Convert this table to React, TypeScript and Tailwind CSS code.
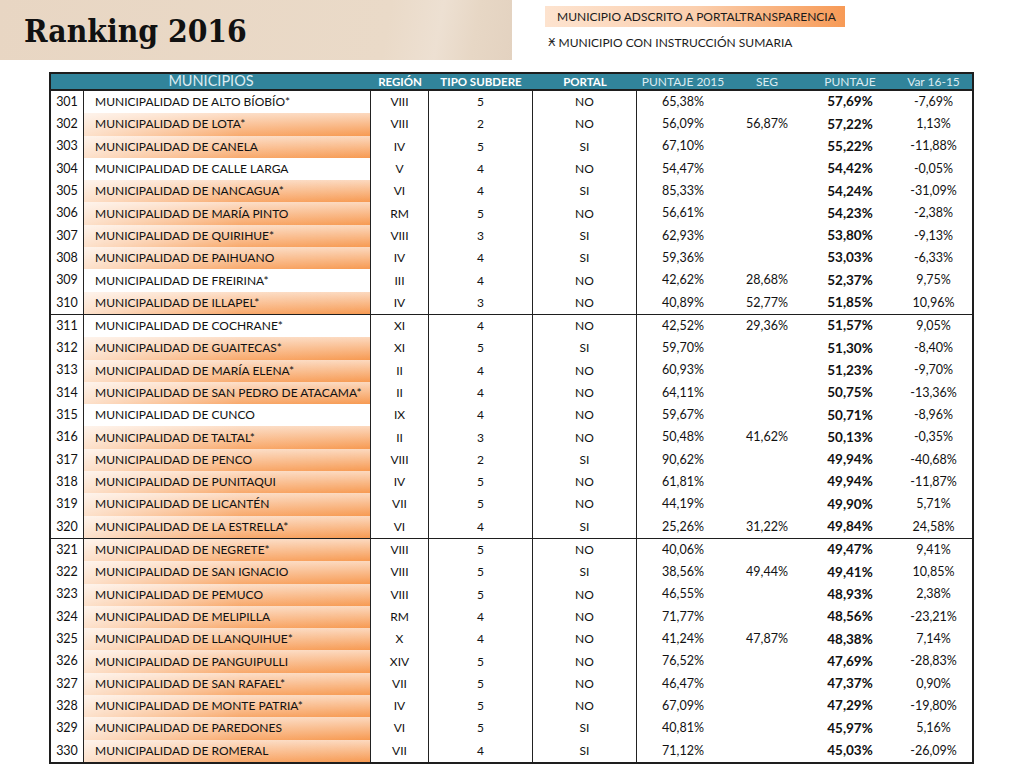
type Row = {
  n: number;
  name: string;
  region: string;
  tipo: string;
  portal: string;
  p2015: string;
  seg: string;
  puntaje: string;
  variacion: string;
  orange: boolean;
};

const raw: [number, string, string, string, string, string, string, string, string, boolean][] = [
  [301, "ALTO BÍOBÍO*", "VIII", "5", "NO", "65,38%", "", "57,69%", "-7,69%", false],
  [302, "LOTA*", "VIII", "2", "NO", "56,09%", "56,87%", "57,22%", "1,13%", true],
  [303, "CANELA", "IV", "5", "SI", "67,10%", "", "55,22%", "-11,88%", true],
  [304, "CALLE LARGA", "V", "4", "NO", "54,47%", "", "54,42%", "-0,05%", false],
  [305, "NANCAGUA*", "VI", "4", "SI", "85,33%", "", "54,24%", "-31,09%", true],
  [306, "MARÍA PINTO", "RM", "5", "NO", "56,61%", "", "54,23%", "-2,38%", true],
  [307, "QUIRIHUE*", "VIII", "3", "SI", "62,93%", "", "53,80%", "-9,13%", true],
  [308, "PAIHUANO", "IV", "4", "SI", "59,36%", "", "53,03%", "-6,33%", true],
  [309, "FREIRINA*", "III", "4", "NO", "42,62%", "28,68%", "52,37%", "9,75%", false],
  [310, "ILLAPEL*", "IV", "3", "NO", "40,89%", "52,77%", "51,85%", "10,96%", true],
  [311, "COCHRANE*", "XI", "4", "NO", "42,52%", "29,36%", "51,57%", "9,05%", false],
  [312, "GUAITECAS*", "XI", "5", "SI", "59,70%", "", "51,30%", "-8,40%", true],
  [313, "MARÍA ELENA*", "II", "4", "NO", "60,93%", "", "51,23%", "-9,70%", true],
  [314, "SAN PEDRO DE ATACAMA*", "II", "4", "NO", "64,11%", "", "50,75%", "-13,36%", true],
  [315, "CUNCO", "IX", "4", "NO", "59,67%", "", "50,71%", "-8,96%", false],
  [316, "TALTAL*", "II", "3", "NO", "50,48%", "41,62%", "50,13%", "-0,35%", true],
  [317, "PENCO", "VIII", "2", "SI", "90,62%", "", "49,94%", "-40,68%", true],
  [318, "PUNITAQUI", "IV", "5", "NO", "61,81%", "", "49,94%", "-11,87%", true],
  [319, "LICANTÉN", "VII", "5", "NO", "44,19%", "", "49,90%", "5,71%", true],
  [320, "LA ESTRELLA*", "VI", "4", "SI", "25,26%", "31,22%", "49,84%", "24,58%", true],
  [321, "NEGRETE*", "VIII", "5", "NO", "40,06%", "", "49,47%", "9,41%", true],
  [322, "SAN IGNACIO", "VIII", "5", "SI", "38,56%", "49,44%", "49,41%", "10,85%", true],
  [323, "PEMUCO", "VIII", "5", "NO", "46,55%", "", "48,93%", "2,38%", true],
  [324, "MELIPILLA", "RM", "4", "NO", "71,77%", "", "48,56%", "-23,21%", true],
  [325, "LLANQUIHUE*", "X", "4", "NO", "41,24%", "47,87%", "48,38%", "7,14%", true],
  [326, "PANGUIPULLI", "XIV", "5", "NO", "76,52%", "", "47,69%", "-28,83%", true],
  [327, "SAN RAFAEL*", "VII", "5", "NO", "46,47%", "", "47,37%", "0,90%", true],
  [328, "MONTE PATRIA*", "IV", "5", "NO", "67,09%", "", "47,29%", "-19,80%", true],
  [329, "PAREDONES", "VI", "5", "SI", "40,81%", "", "45,97%", "5,16%", true],
  [330, "ROMERAL", "VII", "4", "SI", "71,12%", "", "45,03%", "-26,09%", true],
];

const rows: Row[] = raw.map(([n, name, region, tipo, portal, p2015, seg, puntaje, variacion, orange]) => ({
  n,
  name: `MUNICIPALIDAD DE ${name}`,
  region,
  tipo,
  portal,
  p2015,
  seg,
  puntaje,
  variacion,
  orange,
}));

const groups = [rows.slice(0, 10), rows.slice(10, 20), rows.slice(20, 30)];

const cols = "grid grid-cols-[33px_287px_58px_104px_104px_92px_76px_90px_77px]";

// celdas naranjas: degradado vertical + aclarado hacia la izquierda
const orangeBg =
  "bg-[linear-gradient(to_right,rgba(255,255,255,0.7),rgba(255,255,255,0.15)_55%,rgba(255,255,255,0)),linear-gradient(to_bottom,#fcd9bf,#f79a52)]";

function TableRow({ row }: { row: Row }) {
  return (
    <div className={`${cols} h-[22.3px] items-stretch leading-none text-[12px] text-[#111]`}>
      <div className="flex items-center justify-center border-r border-[#222] text-[12.5px]">{row.n}</div>
      <div className={`flex items-center border-r border-[#222] pl-[11px] ${row.orange ? orangeBg : ""}`}>
        {row.name}
      </div>
      <div className="flex items-center justify-center border-r border-[#222]">{row.region}</div>
      <div className="flex items-center justify-center border-r border-[#222]">{row.tipo}</div>
      <div className="flex items-center justify-center border-r border-[#222]">{row.portal}</div>
      <div className="flex items-center justify-center text-[12.5px]">{row.p2015}</div>
      <div className="flex items-center justify-center text-[12.5px]">{row.seg}</div>
      <div className="flex items-center justify-center text-[13.5px] font-bold">{row.puntaje}</div>
      <div className="flex items-center justify-center text-[12.5px]">{row.variacion}</div>
    </div>
  );
}

export default function App() {
  return (
    <div className="h-[768px] w-[1024px] overflow-hidden bg-white font-['Lato',sans-serif]">
      <div className="flex">
        <div className="flex h-[60px] w-[512px] items-center bg-[linear-gradient(100deg,#e8d6c3_0%,#eadac8_75%,#ede0d2_85%,#e7d7c5_92%,#e3d2c0_100%)] pl-[24px]">
          <h1 className="mt-[2px] font-['DejaVu_Serif',serif] text-[31.5px] font-black leading-none text-[#111] font-stretch-condensed">
            Ranking 2016
          </h1>
        </div>
        <div className="ml-[33px] pt-[6px] text-[12px] text-[#1b1b1b]">
          <div className="flex h-[21px] w-[300px] items-center bg-[linear-gradient(to_right,#fde3cf,#fbcfae_50%,#f79a56)] pl-[12px]">
            MUNICIPIO ADSCRITO A PORTALTRANSPARENCIA
          </div>
          <div className="mt-[7px] flex items-center pl-[3px]">
            <span className="mr-[3px] font-['DejaVu_Sans',sans-serif] text-[11px]">Ӿ</span>
            MUNICIPIO CON INSTRUCCIÓN SUMARIA
          </div>
        </div>
      </div>

      <div className="ml-[49px] mt-[12px] w-[925px] border-2 border-[#1e1e1e]">
        <div className={`${cols} h-[17px] items-center border-b-2 border-[#1e1e1e] bg-[#31849b] leading-none`}>
          <div className="col-span-2 text-center text-[14.5px] text-[#dcecf2]">MUNICIPIOS</div>
          <div className="text-center text-[11.5px] font-bold text-white">REGIÓN</div>
          <div className="text-center text-[11.5px] font-bold text-white">TIPO SUBDERE</div>
          <div className="text-center text-[11.5px] font-bold text-white">PORTAL</div>
          <div className="text-center text-[12px] text-[#dcecf2]">PUNTAJE 2015</div>
          <div className="text-center text-[12px] text-[#dcecf2]">SEG</div>
          <div className="text-center text-[12px] text-[#dcecf2]">PUNTAJE</div>
          <div className="text-center text-[12px] text-[#dcecf2]">Var 16-15</div>
        </div>
        {groups.map((g, i) => (
          <div key={i} className={i > 0 ? "border-t-[1.5px] border-[#1e1e1e]" : ""}>
            {g.map((r) => (
              <TableRow key={r.n} row={r} />
            ))}
          </div>
        ))}
      </div>
    </div>
  );
}
